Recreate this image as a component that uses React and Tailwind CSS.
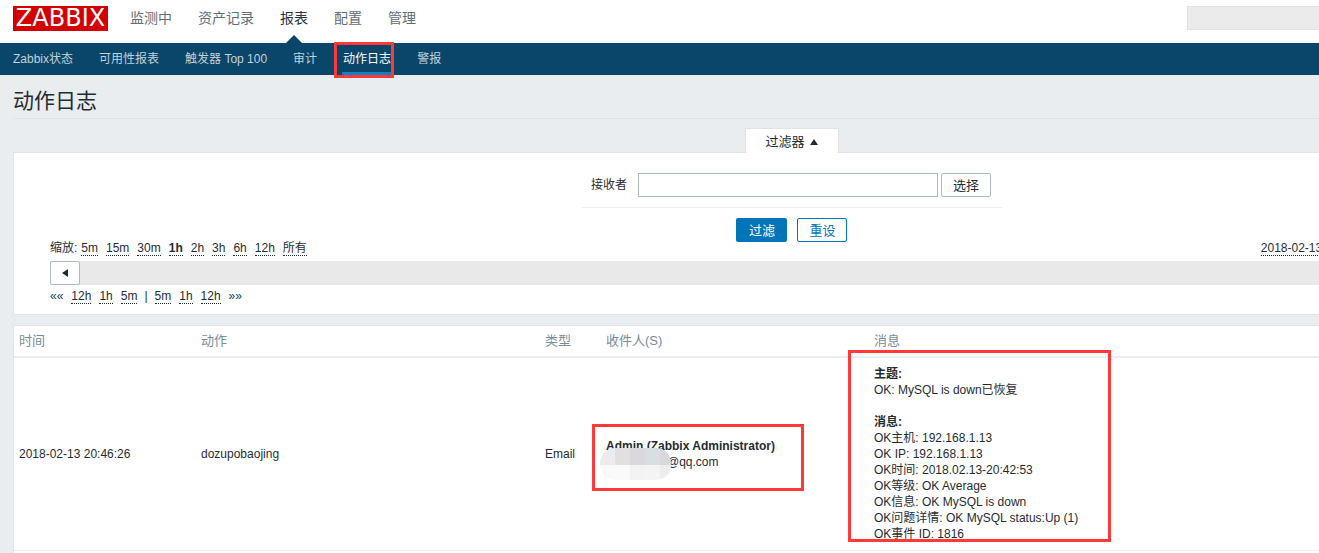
import React from 'react';
import clsx from 'clsx';

const MENU = ['监测中', '资产记录', '报表', '配置', '管理'];
const SUBMENU = ['Zabbix状态', '可用性报表', '触发器 Top 100', '审计', '动作日志', '警报'];
const ZOOM = ['5m', '15m', '30m', '1h', '2h', '3h', '6h', '12h', '所有'];

const MESSAGE = [
    'OK主机: 192.168.1.13',
    'OK IP: 192.168.1.13',
    'OK时间: 2018.02.13-20:42:53',
    'OK等级: OK Average',
    'OK信息: OK MySQL is down',
    'OK问题详情: OK MySQL status:Up (1)',
    'OK事件 ID: 1816',
];

function Header() {
    return (
        <header>
            <div className="flex h-[43px] items-start bg-white pl-[13px]">
                <a
                    href="#"
                    className="mt-[6px] flex h-[25px] w-[95px] items-center justify-center bg-[#d40000] font-['DejaVu_Sans',sans-serif] text-[24px] leading-[25px] text-white"
                >
                    ZABBIX
                </a>
                <nav className="ml-[22px] flex gap-[26px] text-[14px] leading-[36px] text-[#5d6f7a]">
                    {MENU.map((item) => (
                        <a key={item} href="#" className={clsx('relative h-[43px]', item === '报表' && 'text-[#26363f]')}>
                            {item}
                            {item === '报表' && (
                                <svg className="absolute bottom-0 left-[6px]" width="16" height="8" viewBox="0 0 16 8">
                                    <path d="M0 8L8 0L16 8Z" fill="#0a466a" />
                                </svg>
                            )}
                        </a>
                    ))}
                </nav>
                <input
                    type="text"
                    aria-label="Search"
                    className="mt-[6px] mr-[13px] ml-auto h-6 w-[383px] border border-[#e3e3e3] bg-[#ebebeb]"
                />
            </div>
            <nav className="flex h-8 gap-[26px] bg-[#0a466a] pl-[13px] text-[12px] leading-[32px] text-[#c3d1da]">
                {SUBMENU.map((item) => (
                    <a key={item} href="#" className={clsx('relative', item === '动作日志' && 'text-white')}>
                        {item}
                        {item === '动作日志' && (
                            <>
                                <span className="absolute right-0 bottom-0 -left-px h-[3px] bg-[#0f80c6]" />
                                <span className="absolute -top-px -right-[3px] -bottom-[3px] -left-[9px] border-3 border-[#ff3838]" />
                            </>
                        )}
                    </a>
                ))}
            </nav>
        </header>
    );
}

function TimeLink({ children, active }) {
    return (
        <a href="#" className={clsx('border-b border-dotted border-[#1f2c33]', active && 'font-bold')}>
            {children}
        </a>
    );
}

function Filter() {
    return (
        <section>
            <div className="flex justify-center">
                <button
                    type="button"
                    className="relative z-10 -mb-px flex h-[25px] w-[94px] items-center justify-center gap-[6px] border border-b-0 border-[#dfe4e7] bg-white pt-px text-[13px]"
                >
                    过滤器
                    <svg width="8" height="6" viewBox="0 0 8 6">
                        <path d="M4 0L8 6H0Z" fill="#1f2c33" />
                    </svg>
                </button>
            </div>
            <form className="border border-[#dfe4e7] bg-white px-9 pt-5 pb-[10px]">
                <div className="mx-auto flex w-[420px] items-center border-b border-[#ebeef0] pb-[10px] pl-[9px]">
                    <label htmlFor="recipient" className="w-[47px]">
                        接收者
                    </label>
                    <input id="recipient" type="text" className="h-6 w-[300px] border border-[#acbbc2] px-1" />
                    <button type="button" className="ml-[3px] h-6 w-[50px] rounded-xs border border-[#acbbc2] pt-px text-[13px]">
                        选择
                    </button>
                </div>
                <div className="flex justify-center gap-[10px] pt-[10px] text-[13px]">
                    <button type="submit" className="h-6 w-[51px] rounded-xs bg-[#0275b8] pt-px text-white">
                        过滤
                    </button>
                    <button type="reset" className="h-6 w-[50px] rounded-xs border border-[#0275b8] pt-px text-[#0275b8]">
                        重设
                    </button>
                </div>
                <div className="-mt-px flex justify-between leading-[14px]">
                    <div className="flex gap-2">
                        <span className="-mr-1">缩放:</span>
                        {ZOOM.map((z) => (
                            <TimeLink key={z} active={z === '1h'}>
                                {z}
                            </TimeLink>
                        ))}
                    </div>
                    <div className="w-[273px]">
                        <TimeLink>2018-02-13</TimeLink>
                    </div>
                </div>
                <div className="mt-[5px] flex h-6 bg-[#e9e9e9]">
                    <button
                        type="button"
                        aria-label="Back"
                        className="flex w-[30px] items-center justify-center rounded-xs border border-[#acbbc2] bg-white"
                    >
                        <svg width="6" height="8" viewBox="0 0 6 8">
                            <path d="M6 0V8L0 4Z" fill="#1f2c33" />
                        </svg>
                    </button>
                </div>
                <div className="mt-1 flex gap-2 leading-[14px]">
                    <a href="#" className="text-[#0a466a]">««</a>
                    <TimeLink>12h</TimeLink>
                    <TimeLink>1h</TimeLink>
                    <TimeLink>5m</TimeLink>
                    <span className="-mx-px">|</span>
                    <TimeLink>5m</TimeLink>
                    <TimeLink>1h</TimeLink>
                    <TimeLink>12h</TimeLink>
                    <a href="#" className="text-[#0a466a]">»»</a>
                </div>
            </form>
        </section>
    );
}

// Mosaic patch that hides the account part of the address
function Redacted() {
    return (
        <svg className="absolute -top-[6px] -left-[6px]" width="71" height="32" viewBox="0 0 71 32">
            <clipPath id="patch">
                <rect width="71" height="32" rx="15" />
            </clipPath>
            <g clipPath="url(#patch)">
                <rect width="15" height="17" fill="#ececee" />
                <rect x="15" width="15" height="17" fill="#e2e0df" />
                <rect x="30" width="15" height="17" fill="#dad8dc" />
                <rect x="45" width="15" height="17" fill="#d9dee3" />
                <rect x="60" width="11" height="17" fill="#d9d8da" />
                <rect y="17" width="15" height="15" fill="#f9fbfb" />
                <rect x="15" y="17" width="15" height="15" fill="#fafafa" />
                <rect x="30" y="17" width="15" height="15" fill="#f3f3f4" />
                <rect x="45" y="17" width="15" height="15" fill="#f4f4f5" />
                <rect x="60" y="17" width="11" height="15" fill="#ededee" />
            </g>
        </svg>
    );
}

function ActionTable() {
    return (
        <div className="mt-[10px] border border-[#dfe4e7] bg-white pb-8">
            <table className="w-full table-fixed border-collapse text-left">
                <thead>
                    <tr className="h-[31px] border-b-2 border-[#ebeef0] text-[13px] text-[#768d99]">
                        <th className="w-[182px] px-[5px] font-normal">时间</th>
                        <th className="w-[344px] px-[5px] font-normal">动作</th>
                        <th className="w-[61px] px-[5px] font-normal">类型</th>
                        <th className="w-[268px] px-[5px] font-normal">收件人(S)</th>
                        <th className="px-[5px] font-normal">消息</th>
                    </tr>
                </thead>
                <tbody>
                    <tr className="border-b border-[#ebeef0]">
                        <td className="px-[5px]">2018-02-13 20:46:26</td>
                        <td className="px-[5px]">dozupobaojing</td>
                        <td className="px-[5px]">Email</td>
                        <td className="px-[5px]">
                            <div className="relative">
                                <b>Admin (Zabbix Administrator)</b>
                                <div className="relative pl-[61px]">
                                    @qq.com
                                    <Redacted />
                                </div>
                                <span className="absolute -top-[14px] -left-[14px] h-[67px] w-[212px] border-3 border-[#ff3838]" />
                            </div>
                        </td>
                        <td className="px-[5px] py-2">
                            <div className="relative">
                                <b>主题:</b>
                                <p>OK: MySQL is down已恢复</p>
                                <b className="mt-4 block">消息:</b>
                                {MESSAGE.map((line) => (
                                    <p key={line}>{line}</p>
                                ))}
                                <span className="absolute -top-4 bottom-0 -left-[26px] w-[263px] border-3 border-[#ff3838]" />
                            </div>
                        </td>
                    </tr>
                </tbody>
            </table>
        </div>
    );
}

export default function App() {
    return (
        <div className="min-h-screen overflow-hidden bg-[#e9edf0] font-['Liberation_Sans','Noto_Sans_CJK_SC',sans-serif] text-[12px] leading-[16px] text-[#1f2c33]">
            {/* the page is wider than the window and runs off its right edge */}
            <div className="w-[120%]">
                <Header />
                <main className="pr-3 pl-[13px]">
                    <h1 className="mb-[9px] border-b border-[#dfe4e7] pt-3 pb-[3px] text-[21px] leading-[28px]">动作日志</h1>
                    <Filter />
                    <ActionTable />
                </main>
            </div>
        </div>
    );
}
